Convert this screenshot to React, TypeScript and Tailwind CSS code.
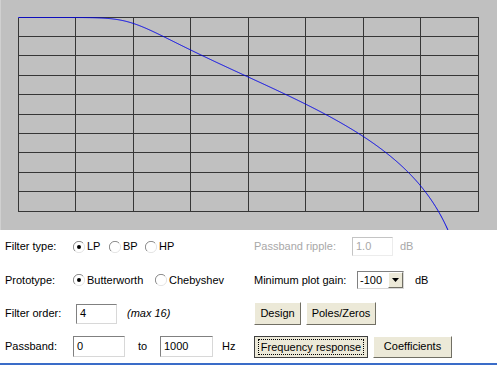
import React from 'react';

// 4th order Butterworth low-pass, bilinear, fc 1000 Hz, fs 8000 Hz
const cols = [0, 1, 2, 3, 4, 5, 6, 7, 8].map((i) => 18 + Math.floor(i * 57.5));
const rows = [0, 1, 2, 3, 4, 5, 6, 7, 8, 9, 10].map((j) => 17 + Math.floor(j * 19.4));

const curve = (() => {
    const pts: string[] = [];
    const wc = Math.tan(Math.PI * 1000 / 8000);
    for (let x = 18; x <= 478; x += 0.5) {
        const f = ((x - 18) / 460) * 4000;
        const r = Math.tan(Math.PI * f / 8000) / wc;
        const att = 10 * Math.log10(1 + Math.pow(r, 8));
        const y = 17.5 + att * 1.94;
        pts.push(`${x},${y.toFixed(2)}`);
        if (y > 240) break;
    }
    return pts.join(' ');
})();

const Radio = ({ checked }: { checked?: boolean }) => (
    <svg width="12" height="12" viewBox="0 0 12 12" className="shrink-0">
        <path d="M10 2 A5.5 5.5 0 0 0 2 10" fill="none" stroke="#8a8a8a" strokeWidth="1" />
        <path d="M2 10 A5.5 5.5 0 0 0 10 2" fill="none" stroke="#e4e4e4" strokeWidth="1" />
        {checked && <circle cx="6" cy="6" r="2" fill="#000" />}
    </svg>
);

const Field = ({ value, className, disabled }: { value: string; className: string; disabled?: boolean }) => (
    <div
        className={`flex items-center bg-white border pl-[3px] ${className} ${
            disabled
                ? 'border-t-[#c4c4c4] border-l-[#c4c4c4] border-r-[#ececec] border-b-[#ececec] text-[#a8a8a8]'
                : 'border-t-[#808080] border-l-[#808080] border-r-[#d8d8d8] border-b-[#d8d8d8]'
        }`}
    >
        {value}
    </div>
);

const Button = ({ label, className, focused }: { label: string; className: string; focused?: boolean }) => (
    <div
        className={`flex items-center justify-center bg-[#ece9d8] border ${
            focused
                ? 'border-[#404040]'
                : 'border-t-[#ffffff] border-l-[#ffffff] border-r-[#716f64] border-b-[#716f64]'
        } ${className}`}
    >
        {focused ? (
            <span className="border border-dotted border-[#000] px-[2px] leading-[14px]">{label}</span>
        ) : (
            label
        )}
    </div>
);

const App = () => {
    return (
        <div
            className="w-[497px] h-[365px] bg-white overflow-hidden text-[11px] text-black"
            style={{ fontFamily: '"Liberation Sans", Arial, sans-serif' }}
        >
            {/* Plot canvas */}
            <div className="h-[230px] bg-[#c0c0c0] border-l border-l-[#d0d0d0]">
                <svg width="496" height="230" viewBox="1 0 496 230" className="block">
                    <g stroke="#363636" strokeWidth="1" shapeRendering="crispEdges">
                        {cols.map((x) => (
                            <line key={x} x1={x + 0.5} y1={17.5} x2={x + 0.5} y2={211.5} />
                        ))}
                        {rows.map((y) => (
                            <line key={y} x1={18.5} y1={y + 0.5} x2={478.5} y2={y + 0.5} />
                        ))}
                    </g>
                    <polyline points={curve} fill="none" stroke="#0000e8" strokeWidth="1" />
                </svg>
            </div>

            {/* Controls */}
            <div className="flex flex-col">
                <div className="h-[33px] flex items-center">
                    <div className="w-[254px] flex items-center">
                        <span className="w-[73px] pl-[5px]">Filter type:</span>
                        <Radio checked />
                        <span className="ml-[2px] w-[22px]">LP</span>
                        <Radio />
                        <span className="ml-[2px] w-[22px]">BP</span>
                        <Radio />
                        <span className="ml-[2px]">HP</span>
                    </div>
                    <span className="w-[98px] text-[#a8a8a8]">Passband ripple:</span>
                    <Field value="1.0" className="w-[41px] h-[19px]" disabled />
                    <span className="ml-[7px] text-[#a8a8a8]">dB</span>
                </div>

                <div className="h-[34px] flex items-center">
                    <div className="w-[254px] flex items-center">
                        <span className="w-[73px] pl-[5px]">Prototype:</span>
                        <Radio checked />
                        <span className="ml-[2px] w-[68px]">Butterworth</span>
                        <Radio />
                        <span className="ml-[2px]">Chebyshev</span>
                    </div>
                    <span className="w-[103px]">Minimum plot gain:</span>
                    <div className="w-[47px] h-[18px] flex bg-white border border-t-[#808080] border-l-[#808080] border-r-[#d8d8d8] border-b-[#d8d8d8]">
                        <span className="flex-1 pl-[2px] leading-[16px]">-100</span>
                        <div className="w-[15px] bg-[#ece9d8] border border-t-[#ffffff] border-l-[#ffffff] border-r-[#716f64] border-b-[#716f64] flex items-center justify-center">
                            <svg width="7" height="4" viewBox="0 0 7 4">
                                <path d="M0 0 H7 L3.5 4 Z" fill="#000" />
                            </svg>
                        </div>
                    </div>
                    <span className="ml-[11px]">dB</span>
                </div>

                <div className="h-[33px] flex items-center">
                    <div className="w-[254px] flex items-center">
                        <span className="w-[76px] pl-[5px]">Filter order:</span>
                        <Field value="4" className="w-[41px] h-[20px]" />
                        <span className="ml-[10px] italic">(max 16)</span>
                    </div>
                    <Button label="Design" className="w-[47px] h-[23px]" />
                    <Button label="Poles/Zeros" className="ml-[5px] w-[70px] h-[23px]" />
                </div>

                <div className="h-[33px] flex items-center">
                    <div className="w-[254px] flex items-center">
                        <span className="w-[73px] pl-[5px]">Passband:</span>
                        <Field value="0" className="w-[52px] h-[21px]" />
                        <span className="ml-[13px] w-[22px]">to</span>
                        <Field value="1000" className="w-[53px] h-[21px]" />
                        <span className="ml-[9px]">Hz</span>
                    </div>
                    <Button label="Frequency response" className="w-[114px] h-[22px]" focused />
                    <Button label="Coefficients" className="ml-[5px] w-[79px] h-[22px]" />
                </div>
            </div>
            <div className="h-[2px] bg-[#3a6cc8]" />
        </div>
    );
};

export default App;
